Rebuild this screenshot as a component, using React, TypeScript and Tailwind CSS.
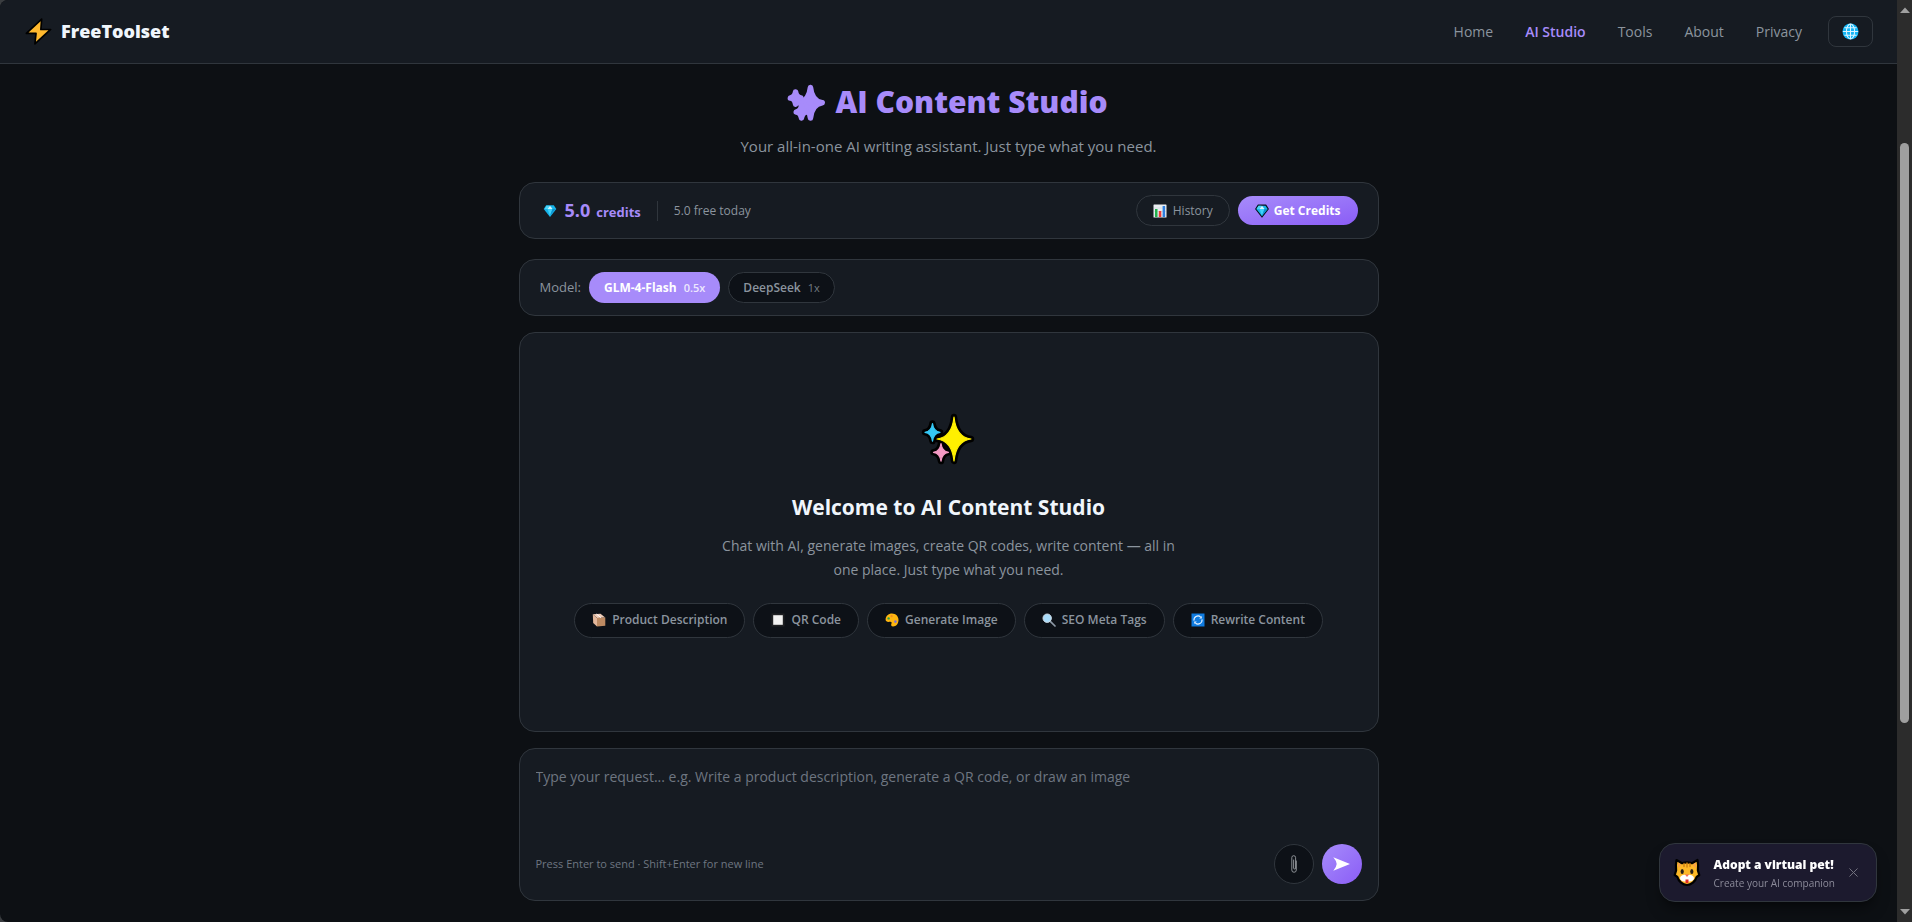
import React from "react";

type IconProps = { className?: string };

const SPARK_LARGE = "M31 5Q33 25 48 27 33 29 31 49 29 29 14 27 29 25 31 5Z";
const SPARK_BLUE = "M9.500 11.500Q10.500 19.300 17 20.300 10.500 21.300 9.500 29.100 8.500 21.300 2 20.300 8.500 19.300 9.500 11.500Z";
const SPARK_PINK = "M18 31.500Q19 39.300 25.500 40.300 19 41.300 18 49.100 17 41.300 10.500 40.300 17 39.300 18 31.500Z";

function BoltIcon({ className }: IconProps) {
  return (
    <svg viewBox="0 0 24 24" className={className} aria-hidden="true">
      <path d="M14.800 1 1.200 13.700h8.600L8.800 23 22.800 10.200h-8.700Z" fill="#ffb92e" stroke="#000" strokeWidth="1.500" strokeLinejoin="round" />
    </svg>
  );
}

function GlobeIcon({ className }: IconProps) {
  return (
    <svg viewBox="0 0 18 18" className={className} aria-hidden="true">
      <circle cx="9" cy="9" r="8.500" fill="#12b5f5" />
      <g fill="none" stroke="#d9f4ff" strokeWidth="1.100">
        <path d="M9 1v16M1 9h16M2.500 5h13M2.500 13h13" />
        <ellipse cx="9" cy="9" rx="4.300" ry="8" />
      </g>
    </svg>
  );
}

function SparklesSilhouette({ className }: IconProps) {
  return (
    <svg viewBox="0 0 52 52" className={className} aria-hidden="true">
      <g fill="#a78bfa" stroke="#a78bfa" strokeWidth="8" strokeLinejoin="round">
        <path d={SPARK_LARGE} />
        <path d={SPARK_BLUE} />
        <path d={SPARK_PINK} />
      </g>
    </svg>
  );
}

function SparklesIcon({ className }: IconProps) {
  return (
    <svg viewBox="0 0 52 52" className={className} aria-hidden="true">
      <g fill="#000" stroke="#000" strokeWidth="6.500" strokeLinejoin="round">
        <path d={SPARK_LARGE} />
        <path d={SPARK_BLUE} />
        <path d={SPARK_PINK} />
      </g>
      <g strokeWidth="1.200" strokeLinejoin="round">
        <path d={SPARK_LARGE} fill="#fff000" stroke="#fff000" />
        <path d={SPARK_BLUE} fill="#35c8f5" stroke="#35c8f5" />
        <path d={SPARK_PINK} fill="#f59ac4" stroke="#f59ac4" />
      </g>
    </svg>
  );
}

function GemIcon({ className, outlined }: IconProps & { outlined?: boolean }) {
  return (
    <svg viewBox="0 0 14 14" className={className} aria-hidden="true">
      <path d="M3.200 1.200h7.600L13.300 5 7 13 .7 5Z" fill="#16b4ea" stroke={outlined ? "#06141c" : "none"} strokeWidth="1.200" strokeLinejoin="round" />
      <path d="M4.500 5h5L7 11.800Z" fill="#3fd3fb" />
      <path d="M3.500 1.800h3L4.500 5H1.600Z" fill="#4bd5f7" />
      <path d="M7 1.700 9.500 5h-5Z" fill="#d3f6ff" />
      <path d="M9.500 5h2.900L7 11.800Z" fill="#0c93d0" />
    </svg>
  );
}

function ChartIcon({ className }: IconProps) {
  return (
    <svg viewBox="0 0 14 14" className={className} aria-hidden="true">
      <rect x=".5" y=".5" width="13" height="13" rx=".6" fill="#e9edf1" />
      <path d="M1 4h12M1 7.500h12M1 11h12" stroke="#cdd3da" strokeWidth=".6" />
      <rect x="2" y="5" width="2.500" height="8" fill="#22b04b" />
      <rect x="5.800" y="7" width="2.500" height="6" fill="#ee3a38" />
      <rect x="9.600" y="2" width="2.500" height="11" fill="#2e7fe0" />
    </svg>
  );
}

function BoxIcon({ className }: IconProps) {
  return (
    <svg viewBox="0 0 14 14" className={className} aria-hidden="true">
      <path d="M.8 1.200 8.500.8l4.700 3.600-8 .6Z" fill="#f0cdb8" />
      <path d="M.8 1.200 5 5v8.500L1.200 10Z" fill="#e3b79b" />
      <path d="M5 5l8.300-.6v8.300L5 13.500Z" fill="#bd8a62" />
      <path d="M4.500 1 9 4.700" stroke="#fff" strokeWidth=".9" />
    </svg>
  );
}

function SquareIcon({ className }: IconProps) {
  return (
    <svg viewBox="0 0 14 14" className={className} aria-hidden="true">
      <rect x=".5" y=".5" width="13" height="13" fill="#1f2023" />
      <rect x="2.200" y="2.200" width="9.600" height="9.600" fill="#f1f1f1" />
    </svg>
  );
}

function PaletteIcon({ className }: IconProps) {
  return (
    <svg viewBox="0 0 14 14" className={className} aria-hidden="true">
      <path d="M7 .6c3.700 0 6.500 2.800 6.500 6.400 0 3.700-2.400 6.500-5.400 6.500-2 0-2.300-1.500-1.700-2.700.6-1.300 0-2.300-1.500-2C3 9.200.6 9 .6 6.600.6 3.200 3.500.6 7 .6Z" fill="#ffb60f" />
      <circle cx="3.600" cy="5.400" r="1.200" fill="#29a34a" />
      <circle cx="6.600" cy="3.200" r="1.100" fill="#f08a24" />
      <circle cx="10.400" cy="8.600" r="1.300" fill="#7a6fd8" />
    </svg>
  );
}

function MagnifierIcon({ className }: IconProps) {
  return (
    <svg viewBox="0 0 14 14" className={className} aria-hidden="true">
      <path d="m8.300 8.300 4.700 4.700" stroke="#8d99a6" strokeWidth="1.700" strokeLinecap="round" />
      <circle cx="5.200" cy="5.200" r="4.200" fill="#a9dcfb" stroke="#d0dbe4" strokeWidth="1" />
    </svg>
  );
}

function RefreshIcon({ className }: IconProps) {
  return (
    <svg viewBox="0 0 14 14" className={className} aria-hidden="true">
      <rect x=".5" y=".5" width="13" height="13" fill="#0f7be0" />
      <g fill="none" stroke="#e8f3ff" strokeWidth="1.100">
        <path d="M3 7.600A4 4 0 0 1 9.600 4" />
        <path d="M11 6.400A4 4 0 0 1 4.400 10" />
      </g>
      <path d="M10.800 3v2.600H8.200ZM3.200 11v-2.600h2.600Z" fill="#e8f3ff" />
    </svg>
  );
}

function PaperclipIcon({ className }: IconProps) {
  return (
    <svg viewBox="0 0 6 18" className={className} aria-hidden="true">
      <path d="M5.300 6v9a2.200 2.200 0 0 1-4.500 0V2.600a1.900 1.900 0 0 1 3.800 0V13a1 1 0 0 1-2 0V5" fill="none" stroke="#a9adb3" strokeWidth=".8" strokeLinecap="round" />
    </svg>
  );
}

function SendIcon({ className }: IconProps) {
  return (
    <svg viewBox="0 0 17 14" className={className} aria-hidden="true">
      <path d="M.3.300 17 7 .3 13.700Q3.500 10 3.700 7 3.500 4 .3.300Z" fill="#fff" />
    </svg>
  );
}

function CatIcon({ className }: IconProps) {
  return (
    <svg viewBox="0 0 28 29" className={className} aria-hidden="true">
      <path d="M3.500 2 9 5.200c3-1 7-1 10 0L24.500 2c.8 4 .7 8 .4 10.500l1.400 4.500-2.600 1.800C22.500 23.500 18 27 14 27S5.500 23.500 4.300 18.800L1.700 17l1.400-4.500C2.800 10 2.700 6 3.500 2Z" fill="#fdb827" stroke="#000" strokeWidth="2.200" strokeLinejoin="round" />
      <path d="M5 4.500 8.500 7 5.300 10ZM23 4.500 19.500 7l3.200 3Z" fill="#f7a04a" />
      <path d="M14 5v4M11 5.500v3M17 5.500v3" stroke="#c97a12" strokeWidth="1.300" strokeLinecap="round" />
      <ellipse cx="9.200" cy="13.500" rx="1.600" ry="2.600" fill="#2b2118" />
      <ellipse cx="18.800" cy="13.500" rx="1.600" ry="2.600" fill="#2b2118" />
      <path d="M14 17.500c2-1.800 7-.5 7 2.500s-3.500 4-7 3.200C10.500 24 7 23 7 20s5-4.300 7-2.500Z" fill="#fff" />
      <path d="M12 16.500h4L14 19Z" fill="#f26a5a" />
      <path d="M12.500 21.500h3v2.300a1.500 1.500 0 0 1-3 0Z" fill="#e02a2a" />
    </svg>
  );
}

const NAV = [
  { label: "Home", active: false },
  { label: "AI Studio", active: true },
  { label: "Tools", active: false },
  { label: "About", active: false },
  { label: "Privacy", active: false },
];

const CHIPS = [
  { label: "Product Description", Icon: BoxIcon },
  { label: "QR Code", Icon: SquareIcon },
  { label: "Generate Image", Icon: PaletteIcon },
  { label: "SEO Meta Tags", Icon: MagnifierIcon },
  { label: "Rewrite Content", Icon: RefreshIcon },
];

function Header() {
  return (
    <header className="flex h-16 items-center justify-between border-b border-[#30363d] bg-[#161b22] pr-6 pl-[25px]">
      <a href="#" className="flex items-center gap-[9px] text-[18px] font-extrabold text-[#f0f6fc]">
        <BoltIcon className="size-[27px]" />
        FreeToolset
      </a>
      <div className="flex items-center gap-[26px]">
        <nav className="flex items-center gap-8 text-[14px] font-medium">
          {NAV.map(({ label, active }) => (
            <a key={label} href="#" className={active ? "font-semibold text-[#a78bfa]" : "text-[#8b949e]"}>
              {label}
            </a>
          ))}
        </nav>
        <button type="button" aria-label="Language" className="flex h-[31px] w-[45px] items-center justify-center rounded-lg border border-[#30363d]">
          <GlobeIcon className="size-[17px]" />
        </button>
      </div>
    </header>
  );
}

function Credits() {
  return (
    <section className="flex items-center justify-between rounded-2xl border border-[#30363d] bg-[#161b22] px-5 py-3">
      <div className="flex items-center">
        <GemIcon className="mr-2 ml-[3px] size-[14px]" />
        <p className="flex items-baseline gap-[6px] text-[#a78bfa]">
          <span className="text-[18px] leading-6 font-bold">5.0</span>
          <span className="text-[13px] font-bold">credits</span>
        </p>
        <span className="mx-4 h-5 w-px bg-[#30363d]" />
        <span className="text-[12px] font-medium text-[#8b949e]">5.0 free today</span>
      </div>
      <div className="flex items-center gap-2">
        <button type="button" className="flex h-[31px] items-center gap-[6px] rounded-full border border-[#30363d] px-4 text-[12px] font-medium text-[#8b949e]">
          <ChartIcon className="size-[14px]" />
          History
        </button>
        <button type="button" className="flex h-[29px] items-center gap-[5px] rounded-full bg-linear-to-br from-[#a78bfa] to-[#8b5cf6] px-[17px] text-[12px] font-bold text-white">
          <GemIcon outlined className="size-[14px]" />
          Get Credits
        </button>
      </div>
    </section>
  );
}

function ModelPicker() {
  return (
    <section className="mt-5 flex items-center gap-2 rounded-2xl border border-[#30363d] bg-[#161b22] px-5 py-3">
      <span className="text-[13px] text-[#8b949e]">Model:</span>
      <button type="button" className="flex h-[31px] items-baseline gap-[7px] rounded-full bg-[#a78bfa] px-[15px] text-[12px] leading-[31px] font-bold text-white">
        GLM-4-Flash <span className="text-[11px] font-semibold opacity-80">0.5x</span>
      </button>
      <button type="button" className="flex h-[31px] items-baseline gap-[7px] rounded-full border border-[#30363d] bg-[#0d1117] px-[14px] text-[12px] leading-[29px] font-semibold text-[#8b949e]">
        DeepSeek <span className="text-[11px] font-medium opacity-80">1x</span>
      </button>
    </section>
  );
}

function Welcome() {
  return (
    <section className="mt-4 flex min-h-[400px] flex-col items-center justify-center rounded-2xl border border-[#30363d] bg-[#161b22] pb-[15px] text-center">
      <SparklesIcon className="size-[52px] overflow-visible" />
      <h2 className="mt-[27px] text-[21px] leading-8 font-bold text-[#f0f6fc]">Welcome to AI Content Studio</h2>
      <p className="mt-[11px] max-w-[480px] text-[14px] leading-6 text-[#8b949e]">
        Chat with AI, generate images, create QR codes, write content — all in one place. Just type what you need.
      </p>
      <div className="mt-[21px] flex flex-wrap justify-center gap-2">
        {CHIPS.map(({ label, Icon }) => (
          <button key={label} type="button" className="flex h-[35px] items-center gap-[6px] rounded-full border border-[#30363d] bg-[#0d1117] px-[17px] text-[12px] font-semibold text-[#8b949e]">
            <Icon className="size-[14px] shrink-0" />
            {label}
          </button>
        ))}
      </div>
    </section>
  );
}

function Composer() {
  return (
    <form className="mt-4 rounded-2xl border border-[#30363d] bg-[#161b22] p-4" onSubmit={(e: React.FormEvent) => e.preventDefault()}>
      <textarea
        aria-label="Your request"
        placeholder="Type your request... e.g. Write a product description, generate a QR code, or draw an image"
        className="block h-[71px] w-full resize-none bg-transparent text-[14px] leading-6 text-[#f0f6fc] outline-none placeholder:text-[#6e7681]"
      />
      <div className="mt-2 flex items-center justify-between">
        <span className="text-[11px] text-[#6e7681]">Press Enter to send · Shift+Enter for new line</span>
        <div className="flex gap-2">
          <button type="button" aria-label="Attach file" className="flex size-10 items-center justify-center rounded-full border border-[#30363d] bg-[#0d1117]">
            <PaperclipIcon className="h-[18px] w-[6px]" />
          </button>
          <button type="submit" aria-label="Send" className="flex size-10 items-center justify-center rounded-full bg-linear-to-br from-[#a78bfa] to-[#8b5cf6]">
            <SendIcon className="h-[14px] w-[17px]" />
          </button>
        </div>
      </div>
    </form>
  );
}

function PetPrompt() {
  return (
    <aside className="fixed right-[35px] bottom-5 flex h-[59px] items-center rounded-2xl border border-[#30363d] bg-[#1c1a2e] pr-[15px] pl-[13px] shadow-lg shadow-black/40">
      <CatIcon className="h-[29px] w-7" />
      <div className="ml-[13px]">
        <p className="text-[12px] leading-5 font-extrabold text-white">Adopt a virtual pet!</p>
        <p className="text-[10px] leading-4 text-[#8b8a99]">Create your AI companion</p>
      </div>
      <button type="button" aria-label="Dismiss" className="ml-[10px] flex size-4 items-center justify-center">
        <svg viewBox="0 0 10 10" className="size-[9px]" aria-hidden="true">
          <path d="m.5.5 9 9M9.500.5l-9 9" stroke="#73727f" strokeWidth="1.100" />
        </svg>
      </button>
    </aside>
  );
}

function ScrollRail() {
  return (
    <div className="sticky top-0 flex h-screen w-[15px] shrink-0 flex-col items-center bg-[#2c2c2c] py-[7px]" aria-hidden="true">
      <svg viewBox="0 0 10 6" className="h-[6px] w-[10px]"><path d="M0 6 5 .5 10 6Z" fill="#a0a0a0" /></svg>
      <div className="flex w-[9px] flex-1 flex-col">
        <div className="grow-[130]" />
        <div className="grow-[580] rounded-full bg-[#9f9f9f]" />
        <div className="grow-[186]" />
      </div>
      <svg viewBox="0 0 10 6" className="h-[6px] w-[10px]"><path d="M0 0 5 5.500 10 0Z" fill="#a0a0a0" /></svg>
    </div>
  );
}

export default function App() {
  return (
    <div className="flex min-h-screen bg-[#3a3d40] font-['Open_Sans','Noto_Sans',sans-serif]">
      <div className="min-w-0 flex-1 overflow-hidden rounded-l-lg bg-[#0d1014]">
        <Header />
        <main className="mx-auto max-w-[860px] pt-[14px] pb-5">
          <h1 className="flex items-center justify-center gap-[10px] text-[30px] leading-[48px] font-extrabold text-[#a78bfa]">
            <SparklesSilhouette className="size-9 overflow-visible" />
            AI Content Studio
          </h1>
          <p className="mt-2 mb-6 text-center text-[15px] leading-6 text-[#8b949e]">Your all-in-one AI writing assistant. Just type what you need.</p>
          <Credits />
          <ModelPicker />
          <Welcome />
          <Composer />
        </main>
      </div>
      <ScrollRail />
      <PetPrompt />
    </div>
  );
}
